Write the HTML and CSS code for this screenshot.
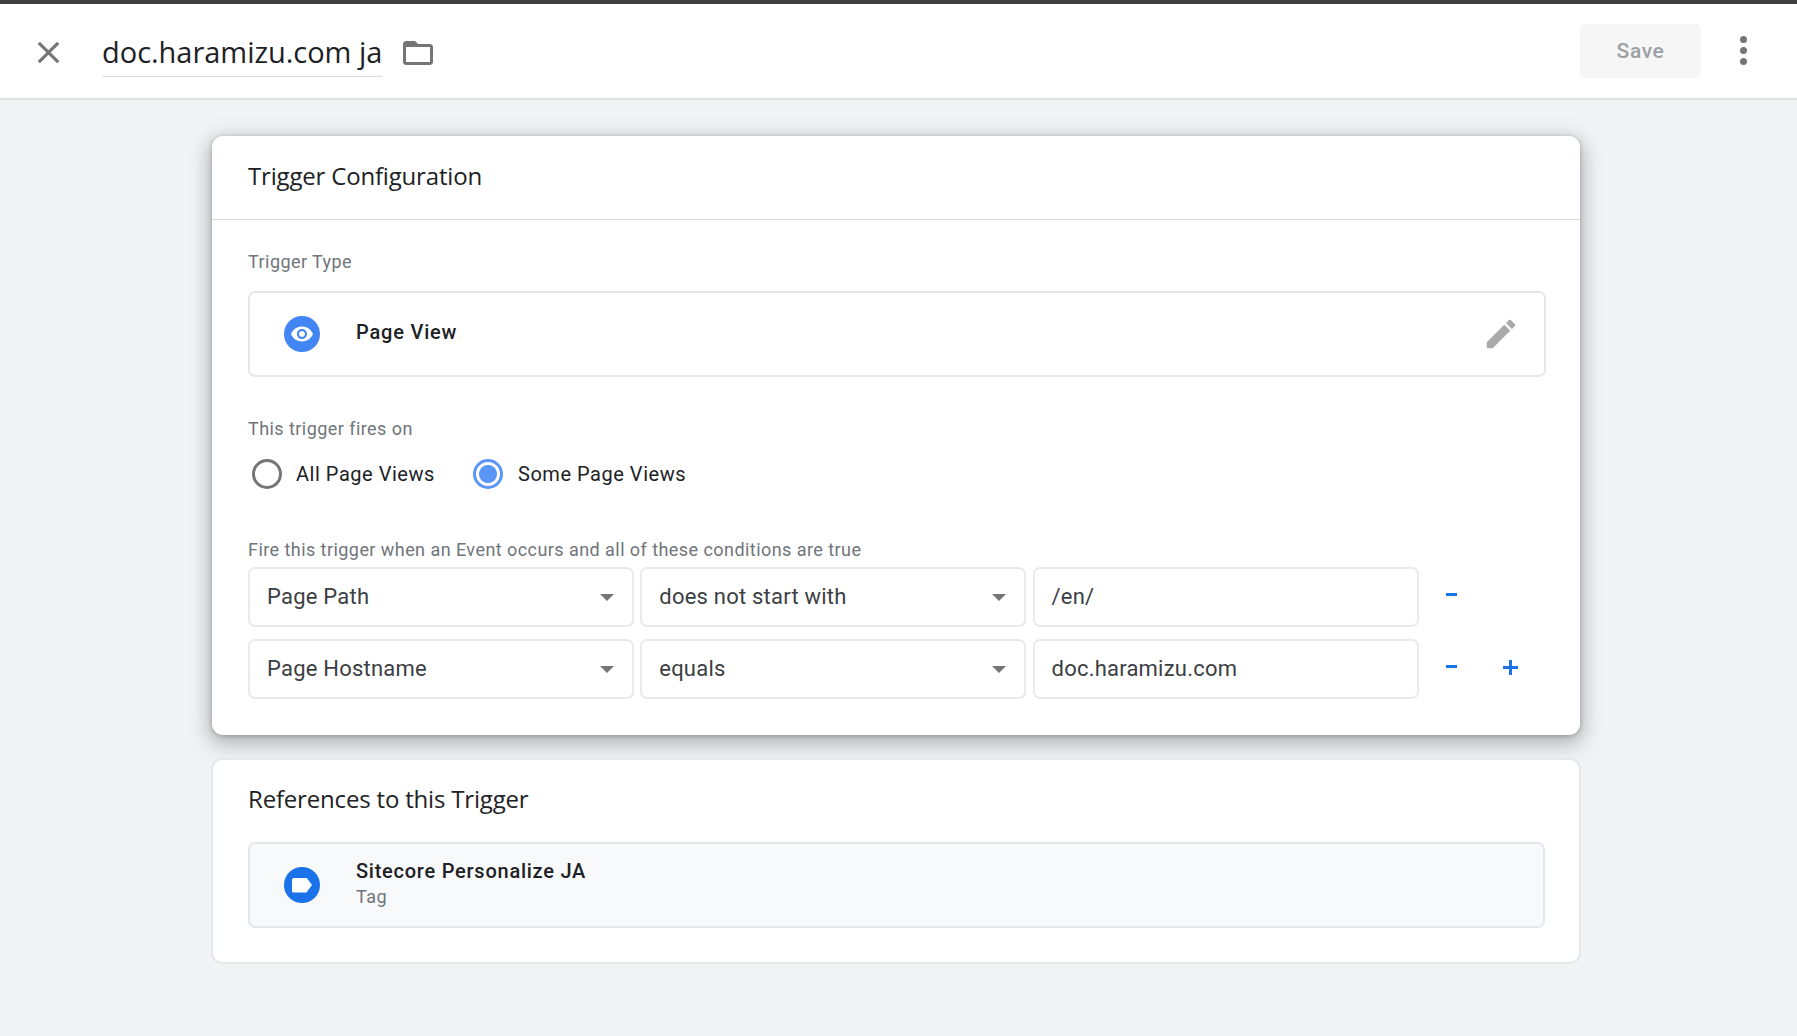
FILE: index.html
```html
<!DOCTYPE html>
<html lang="en">
<head>
<meta charset="utf-8">
<title>doc.haramizu.com ja</title>
<link rel="stylesheet" href="styles.css">
</head>
<body>
<header class="topbar">
  <svg class="ico-close" viewBox="0 0 24 24"><path d="M19 6.41L17.59 5 12 10.59 6.41 5 5 6.41 10.59 12 5 17.59 6.41 19 12 13.41 17.59 19 19 17.59 13.41 12z"/></svg>
  <div class="doc-title">doc.haramizu.com ja</div>
  <svg class="ico-folder" viewBox="0 0 24 24"><path d="M20 6h-8l-2-2H4c-1.1 0-1.99.9-1.99 2L2 18c0 1.1.9 2 2 2h16c1.1 0 2-.9 2-2V8c0-1.1-.9-2-2-2zm0 12H4V8h16v10z"/></svg>
  <div class="save">Save</div>
  <div class="more"><i></i><i></i><i></i></div>
</header>
<main class="page">
  <section class="card card-raised">
    <h2 class="card-head">Trigger Configuration</h2>
    <div class="card-body">
      <div class="label label-first">Trigger Type</div>
      <div class="type-box">
        <span class="badge badge-eye">
          <svg viewBox="0 0 24 24"><path d="M12 4.5C7 4.5 2.73 7.61 1 12c1.73 4.39 6 7.5 11 7.5s9.27-3.11 11-7.5c-1.73-4.39-6-7.5-11-7.5zM12 17c-2.76 0-5-2.24-5-5s2.24-5 5-5 5 2.24 5 5-2.24 5-5 5zm0-8c-1.66 0-3 1.34-3 3s1.34 3 3 3 3-1.34 3-3-1.34-3-3-3z"/></svg>
        </span>
        <span class="type-name">Page View</span>
        <svg class="ico-edit" viewBox="0 0 24 24"><path d="M3 17.25V21h3.75L17.81 9.94l-3.75-3.75L3 17.25zM20.71 7.04c.39-.39.39-1.02 0-1.41l-2.34-2.34c-.39-.39-1.02-.39-1.41 0l-1.83 1.83 3.75 3.75 1.83-1.83z"/></svg>
      </div>
      <div class="label label-fires">This trigger fires on</div>
      <div class="radios">
        <span class="radio"></span><span class="radio-text radio-text-a">All Page Views</span>
        <span class="radio radio-on"></span><span class="radio-text">Some Page Views</span>
      </div>
      <div class="label label-cond">Fire this trigger when an Event occurs and all of these conditions are true</div>
      <div class="conds">
        <div class="field">Page Path<i class="caret"></i></div>
        <div class="field">does not start with<i class="caret"></i></div>
        <div class="field">/en/</div>
        <div class="acts"><span class="minus"></span></div>
        <div class="field">Page Hostname<i class="caret"></i></div>
        <div class="field">equals<i class="caret"></i></div>
        <div class="field">doc.haramizu.com</div>
        <div class="acts"><span class="minus"></span><span class="plus"></span></div>
      </div>
    </div>
  </section>
  <section class="card card-flat">
    <h2 class="refs-head">References to this Trigger</h2>
    <div class="ref-box">
      <span class="badge badge-tag"><i class="tag-shape"></i></span>
      <div class="ref-text">
        <div class="ref-name">Sitecore Personalize JA</div>
        <div class="ref-kind">Tag</div>
      </div>
    </div>
  </section>
</main>
</body>
</html>
```
FILE: styles.css
```css
* { box-sizing: border-box; }
html, body { margin: 0; height: 100%; }
body { background: #f1f3f4; font-family: Roboto, sans-serif; color: #202124; overflow: hidden; }

.topbar { height: 100px; background: #fff; border-top: 4px solid #3f4144; border-bottom: 2px solid #dfe0e2; display: flex; align-items: center; padding: 0 0 0 30px; }
.ico-close { width: 37px; height: 37px; fill: #757575; margin-top: 3px; }
.doc-title { margin-left: 35px; font-family: "Open Sans", sans-serif; font-size: 29px; line-height: 46px; height: 48px; width: 280px; white-space: nowrap; letter-spacing: -0.03px; border-bottom: 1px solid #dadce0; margin-top: 3px; }
.ico-folder { width: 36px; height: 36px; fill: #757575; margin: 3px 0 0 18px; }
.save { margin-left: auto; width: 121px; height: 54px; margin-top: -1px; border-radius: 5px; background: #f6f6f6; color: #9aa0a6; font-size: 21px; font-weight: 500; letter-spacing: .6px; display: flex; align-items: center; justify-content: center; }
.more { width: 8px; margin: -1px 49px 0 39px; display: flex; flex-direction: column; gap: 4px; }
.more i { width: 7px; height: 7px; border-radius: 50%; background: #757575; }

.page { padding: 36px 0 0 212px; }
.card { width: 1368px; background: #fff; border-radius: 11px; }
.card-raised { box-shadow: 0 6px 20px 3px rgba(60,64,67,.36), 0 1px 4px rgba(60,64,67,.3); }
.card-flat { margin: 23px 0 0 -1px; width: 1370px; border: 2px solid #e6e7ea; height: 206px; padding: 0 34px 0 35px; }

.card-head { margin: 0; height: 84px; padding: 0 36px; border-bottom: 1px solid #dadce0; font-family: "Open Sans", sans-serif; font-size: 24px; font-weight: 400; line-height: 80px; letter-spacing: -0.18px; }
.card-body { padding: 0 34px 36px 36px; }

.label { font-size: 18px; line-height: 24px; color: #70757a; letter-spacing: .44px; }
.label-first { margin-top: 30px; }
.label-fires { margin-top: 40px; }
.label-cond { margin-top: 49px; }

.type-box, .ref-box { height: 86px; border: 2px solid #e6e7ea; border-radius: 7px; display: flex; align-items: center; padding-left: 34px; }
.type-box { margin-top: 17px; background: #fff; }
.badge { width: 36px; height: 36px; border-radius: 50%; flex: none; display: flex; align-items: center; justify-content: center; }
.badge-eye { background: #4285f4; }
.badge-eye svg { width: 24px; height: 24px; fill: #fff; }
.type-name { margin-left: 36px; font-size: 20px; font-weight: 500; letter-spacing: .8px; margin-top: -4px; }
.ico-edit { width: 38px; height: 38px; fill: #a9a9a9; margin-left: auto; margin-right: 24px; }

.radios { margin-top: 18px; display: flex; align-items: center; height: 30px; }
.radio { width: 30px; height: 30px; border-radius: 50%; border: 3.5px solid #757575; margin-left: 3.5px; flex: none; }
.radio-on { border-color: #5b95f6; margin-left: 38.5px; background: radial-gradient(circle, #5b95f6 0 8.5px, #fff 9.5px); }
.radio-text { font-size: 20px; margin-left: 15.5px; letter-spacing: .53px; white-space: nowrap; }
.radio-text-a { margin-left: 14.5px; width: 138px; flex: none; }

.conds { margin-top: 5px; display: grid; grid-template-columns: 386px 386px 386px 1fr; column-gap: 6.25px; row-gap: 12px; }
.field { height: 60px; border: 2px solid #e9eaec; border-radius: 7px; padding: 0 17px; font-size: 22px; line-height: 56px; color: #3c4043; position: relative; white-space: nowrap; letter-spacing: .22px; }
.caret { position: absolute; right: 18px; top: 25px; border-style: solid; border-width: 7px 7.5px 0; border-color: #757575 transparent transparent; }
.acts { position: relative; display: flex; align-items: center; padding-left: 21px; }
.minus { width: 11px; height: 3px; background: #1a73e8; margin-top: -6px; }
.plus { width: 15px; height: 15px; margin-left: 46px; margin-top: -4px; background: linear-gradient(#1a73e8,#1a73e8) center/100% 3px no-repeat, linear-gradient(#1a73e8,#1a73e8) center/3px 100% no-repeat; }

.refs-head { margin: 0; font-family: "Open Sans", sans-serif; font-size: 24px; font-weight: 400; line-height: 32px; padding-top: 23px; letter-spacing: -0.18px; }
.ref-box { margin-top: 27px; background: #f8f9fa; }
.badge-tag { background: #1a73e8; }
.tag-shape { width: 20px; height: 15px; background: #fff; border-radius: 2px; clip-path: polygon(0 0, 72% 0, 100% 50%, 72% 100%, 0 100%); }
.ref-text { margin-left: 36px; margin-top: -2px; }
.ref-name { font-size: 20px; font-weight: 500; line-height: 26px; letter-spacing: .75px; }
.ref-kind { font-size: 18px; line-height: 26px; color: #70757a; letter-spacing: .44px; }
```
